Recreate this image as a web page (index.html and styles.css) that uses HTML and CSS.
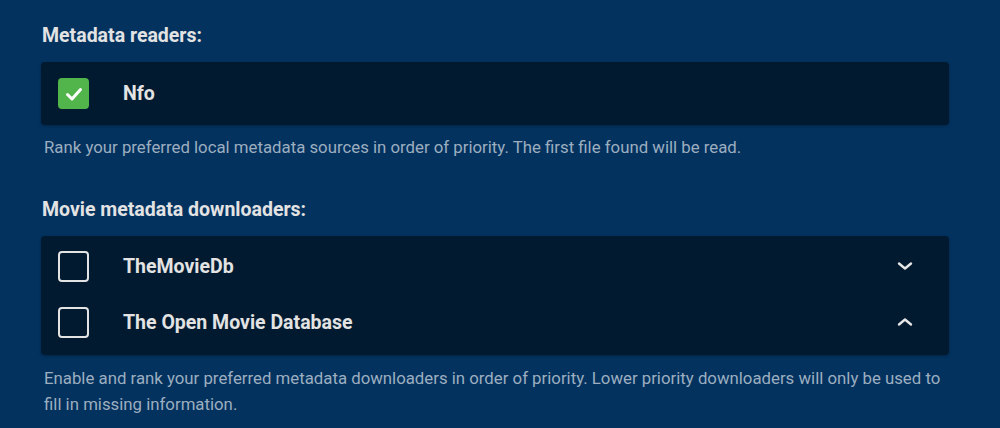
FILE: index.html
```html
<!DOCTYPE html>
<html>
<head>
<meta charset="utf-8">
<link rel="stylesheet" href="styles.css">
</head>
<body>
<div class="page">
  <section class="group">
    <h3 class="label">Metadata readers:</h3>
    <div class="panel panel-single">
      <div class="row row-tall">
        <span class="check checked">
          <svg width="20" height="20" viewBox="0 0 20 20"><path d="M3.5 10.5 L8 15 L16.5 5.5" fill="none" stroke="#fff" stroke-width="3" stroke-linecap="round" stroke-linejoin="round"/></svg>
        </span>
        <span class="name">Nfo</span>
      </div>
    </div>
    <p class="desc">Rank your preferred local metadata sources in order of priority. The first file found will be read.</p>
  </section>
  <section class="group group-second">
    <h3 class="label">Movie metadata downloaders:</h3>
    <div class="panel panel-list">
      <div class="row">
        <span class="check"></span>
        <span class="name">TheMovieDb</span>
        <svg class="chev" width="16" height="16" viewBox="0 0 16 16"><path d="M2 5.5 L8 10.5 L14 5.5" fill="none" stroke="#e6e6e6" stroke-width="2.4" stroke-linecap="round" stroke-linejoin="round"/></svg>
      </div>
      <div class="row">
        <span class="check"></span>
        <span class="name">The Open Movie Database</span>
        <svg class="chev" width="16" height="16" viewBox="0 0 16 16"><path d="M2 10.5 L8 5.5 L14 10.5" fill="none" stroke="#e6e6e6" stroke-width="2.4" stroke-linecap="round" stroke-linejoin="round"/></svg>
      </div>
    </div>
    <p class="desc desc-second">Enable and rank your preferred metadata downloaders in order of priority. Lower priority downloaders will only be used to fill in missing information.</p>
  </section>
</div>
</body>
</html>
```

FILE: styles.css
```css
html, body {
  margin: 0;
  padding: 0;
}
body {
  background: #03325f;
  font-family: Roboto, "Noto Sans", sans-serif;
  color: #e0e0e0;
  width: 1000px;
  height: 428px;
  overflow: hidden;
}
.page {
  padding: 24px 51px 0 41px;
}
.label {
  margin: 0 0 14px 1px;
  font-size: 19.5px;
  font-weight: 700;
  line-height: 24px;
  color: #e3e3e3;
}
.panel {
  background: #011a30;
  border-radius: 4px;
  box-shadow: 0 1px 3px rgba(0,0,0,0.3);
}
.panel-list {
  padding: 2px 0 5px;
}
.row {
  display: flex;
  align-items: center;
  height: 56px;
  padding: 0 36px 0 17px;
}
.row-tall {
  height: 63px;
}
.check {
  width: 27px;
  height: 27px;
  border: 2px solid #e3e3e3;
  border-radius: 4px;
  flex: none;
  display: flex;
  align-items: center;
  justify-content: center;
}
.check.checked {
  background: #52b54b;
  border-color: #52b54b;
}
.name {
  margin-left: 34px;
  font-size: 19.5px;
  font-weight: 700;
  color: #e3e3e3;
  flex: 1;
}
.chev {
  flex: none;
}
.desc {
  margin: 9px 8px 0 3px;
  font-size: 16.8px;
  line-height: 26px;
  color: #9caebf;
}
.desc-second {
  margin-top: 10px;
}
.group-second {
  margin-top: 38px;
}
```
